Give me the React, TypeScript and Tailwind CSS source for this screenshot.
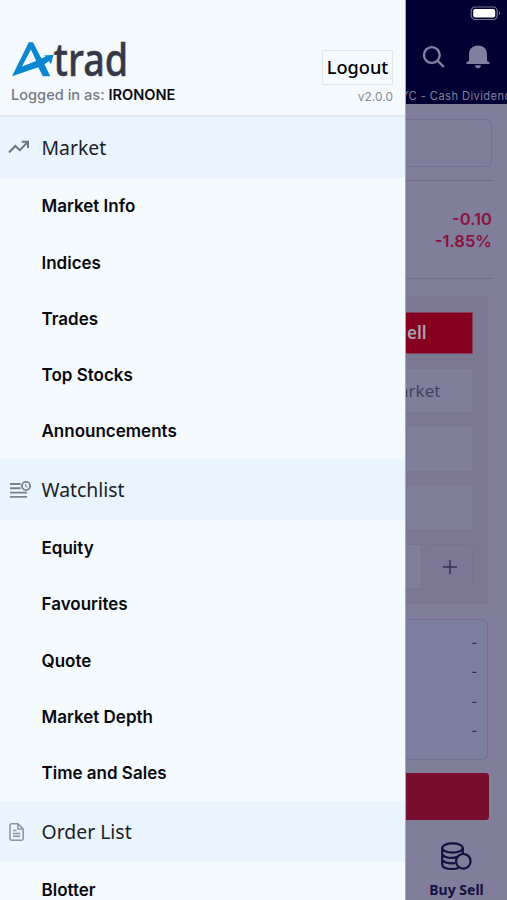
import React from "react";

const sections = [
  { title: "Market", icon: "trend", items: ["Market Info", "Indices", "Trades", "Top Stocks", "Announcements"] },
  { title: "Watchlist", icon: "watch", items: ["Equity", "Favourites", "Quote", "Market Depth", "Time and Sales"] },
  { title: "Order List", icon: "doc", items: ["Blotter"] },
];

function SectionIcon({ name }: { name: string }) {
  if (name === "trend")
    return (
      <svg className="-mt-[2px]" width="24" height="24" viewBox="0 0 24 24" fill="none" stroke="#6f7380" strokeWidth="2">
        <path d="M2 17.5L8.3 11L12.8 15.2L20.4 7.4" />
        <path d="M14.8 6.8H21V13" />
      </svg>
    );
  if (name === "watch")
    return (
      <svg width="24" height="24" viewBox="0 0 24 24" fill="none" stroke="#7a8292" strokeWidth="1.9">
        <path d="M3 6H13.5M3 10.3H13.5M3 14.6H20M3 18.9H20" />
        <circle cx="19" cy="8" r="4.1" />
        <path d="M18.600 6V8.300L20.400 9.100" strokeWidth="1" />
      </svg>
    );
  return (
    <svg width="24" height="24" viewBox="0 0 24 24" fill="none" stroke="#8b93a1" strokeWidth="1.5">
      <path d="M4.500 3.800H11L16.200 9V18.500Q16.200 20.200 14.500 20.200H4.700Q3 20.200 3 18.500V5.500Q3 3.800 4.700 3.800Z" />
      <path d="M11 4V9H16M6 10.500H9.500M6 13.500H13.200M6 16.300H13.200" />
    </svg>
  );
}

function Logo() {
  return (
    <svg width="126" height="44" viewBox="0 0 126 44" className="block overflow-visible">
      <path
        fill="#0b86d0"
        fillRule="evenodd"
        d="M17.800 5.300H22L30.300 21.300L34.600 19.800L33 18.400L42.600 17.700L40 27.200L37.800 24.200L33.500 27.300L39.300 39.200H31.800L27.300 30.300L1 39.200ZM19.900 12.500L11 29.600L25.200 24Z"
      />
      <text x="42.500" y="38.600" fontSize="45" textLength="77" lengthAdjust="spacingAndGlyphs" fill="#353947" stroke="#353947" strokeWidth="0.500" fontFamily="'Noto Sans', 'Open Sans', sans-serif" fontWeight="500" transform="translate(1.300 0) scale(0.970 1)">
        trad
      </text>
    </svg>
  );
}

function Drawer() {
  return (
    <aside className="flex h-full w-[406px] shrink-0 flex-col overflow-hidden border-r border-[#9eabc0] bg-[#f5faff]">
      <header className="flex h-[117px] shrink-0 justify-between border-b-2 border-[#e2e8f0] pr-3 pl-[11px]">
        <div className="pt-[37px]">
          <Logo />
          <p className="mt-[4px] text-[14.6px] leading-5 font-medium whitespace-nowrap text-[#757982]">
            Logged in as: <span className="font-semibold text-[#08090c]">IRONONE</span>
          </p>
        </div>
        <div className="flex flex-col items-end pt-[50px]">
          <button className="flex h-[35px] w-[71px] items-center justify-center border border-[#dfe5eb] pt-px font-['Noto_Sans',sans-serif] text-[18.2px] font-medium text-black">
            Logout
          </button>
          <span className="mt-[3px] text-[12px] leading-[18px] text-[#858990]">v2.0.0</span>
        </div>
      </header>
      <nav>
        {sections.map((s) => (
          <section key={s.title}>
            <h2 className="flex h-[61px] items-center bg-[#e9f4ff] pt-px pl-[7px] font-['Noto_Sans',sans-serif] text-[19.4px] text-[#1d2127]">
              <SectionIcon name={s.icon} />
              <span className="ml-[10.500px]">{s.title}</span>
            </h2>
            {s.items.map((i) => (
              <a key={i} className="flex h-[56.2px] items-center pt-[2px] pl-[41.5px] text-[17px] font-semibold text-[#08090c]">
                {i}
              </a>
            ))}
          </section>
        ))}
      </nav>
    </aside>
  );
}

function Field() {
  return <div className="mt-[13px] h-[45.500px] w-[67px] border border-[#7b7795] bg-[#7f7e9b]" />;
}

function Page() {
  return (
    <main className="flex h-full w-[101px] shrink-0 flex-col overflow-hidden bg-[#807e9b]">
      <header className="flex h-[104px] shrink-0 flex-col bg-[#020032]">
        <div className="flex h-[26px] items-center justify-end pr-[6px]">
          <svg width="31" height="15" viewBox="0 0 31 15">
            <rect x="1.2" y="1" width="26" height="12.5" rx="4" fill="none" stroke="#77758f" strokeWidth="1.2" />
            <rect x="3.2" y="3" width="22" height="8.5" rx="2" fill="#fff" />
            <path d="M29 5.2Q31 7.2 29 9.2Z" fill="#77758f" />
          </svg>
        </div>
        <div className="flex h-[62px] items-center gap-[20px] pl-[16px]">
          <svg width="24" height="24" viewBox="0 0 24 24" fill="none" stroke="#8280a0" strokeWidth="2.4">
            <circle cx="9.800" cy="10" r="7.900" />
            <path d="M15.500 15.700L21.800 22" />
          </svg>
          <svg width="24" height="26" viewBox="0 0 24 26" fill="#8280a0">
            <path d="M12 1.500C17.500 1.500 21 5 21 10.500V15.500C21 17 21.500 18 23.500 18V20H0.500V18C2.500 18 3 17 3 15.500V10.500C3 5 6.500 1.500 12 1.500Z" />
            <path d="M9 21.3H15Q14.5 24.3 12 24.3Q9.500 24.3 9 21.3Z" />
          </svg>
        </div>
        <p className="flex h-4 items-center overflow-hidden text-[11.2px] tracking-[0.4px] whitespace-nowrap text-[#817f9f]">
          <span className="-ml-[5px] pt-px">YC - Cash Dividend</span>
        </p>
      </header>
      <div className="mt-[15px] h-[48px] w-[86px] shrink-0 rounded-r-[6px] border border-l-0 border-[#747190]" />
      <div className="mt-[13px] h-[99px] w-[87px] shrink-0 border-y border-[#706e8b] pt-[28px] pr-px text-right text-[16.600px] leading-[21.500px] font-semibold text-[#8c123d]">
        <p>-0.10</p>
        <p>-1.85%</p>
      </div>
      <section className="mt-[17px] h-[308px] w-[82px] shrink-0 bg-[#7c7792] pt-4 font-['Noto_Sans',sans-serif]">
        <div className="flex h-[42px] w-[67px] items-center overflow-hidden border border-l-0 border-[#83405f] bg-[#860020] text-[17px] font-semibold text-[#aaa2b5]">
          <span className="ml-[1px]">ell</span>
        </div>
        <div className="mt-[14px] flex h-[45px] w-[67px] items-center overflow-hidden border border-l-0 border-[#7b7795] bg-[#7f7e9b] text-[17px] text-[#45425f]">
          <span className="-ml-[7px]">arket</span>
        </div>
        <Field />
        <Field />
        <div className="mt-[14px] flex gap-[7px]">
          <div className="h-[45px] w-[16px] border border-l-0 border-[#777391] bg-[#7f7e9b]" />
          <div className="flex h-[45px] w-[44px] items-center justify-center rounded-sm border border-[#777391] bg-[#7d7895] pr-[3px]">
            <svg width="16" height="16" viewBox="0 0 16 16" stroke="#343151" strokeWidth="1.500">
              <path d="M8 1V15M1 8H15" />
            </svg>
          </div>
        </div>
      </section>
      <section className="mt-[15px] flex h-[141px] w-[82px] shrink-0 flex-col items-end rounded-r-[6px] border border-l-0 border-[#73708f] bg-[#7c7e9d] pt-[8px] pr-[10px] text-[12px] font-semibold text-[#28264a]">
        {[0, 1, 2, 3].map((n) => (
          <span key={n} className="h-[29.3px] leading-[29.3px]">-</span>
        ))}
      </section>
      <div className="mt-[13px] h-[47px] w-[83px] shrink-0 rounded-r-[3px] bg-[#780f31]" />
      <footer className="flex flex-col items-center pt-[22px] font-['Noto_Sans',sans-serif] text-[14px] leading-5 font-bold text-[#14113f]">
        <svg width="32" height="30" viewBox="0 0 32 30" fill="none" stroke="#14113f" strokeWidth="2.200">
          <ellipse cx="11.500" cy="6" rx="10.300" ry="4.600" />
          <path d="M1.200 6V22.500C1.200 25.500 6 27 11.500 27Q15 27 17.500 26M21.800 6V11.500M1.200 11.500C1.200 14.500 7 16.300 12 15.800Q15 15.500 17 14.500M1.200 17C1.200 20 7 21.800 14 21.200" />
          <circle cx="22.300" cy="19.300" r="7.300" />
        </svg>
        <span className="mt-[8px]">Buy Sell</span>
      </footer>
    </main>
  );
}

export default function App() {
  return (
    <div className="flex h-[900px] w-[507px] overflow-hidden font-[Inter,sans-serif]">
      <Drawer />
      <Page />
    </div>
  );
}
